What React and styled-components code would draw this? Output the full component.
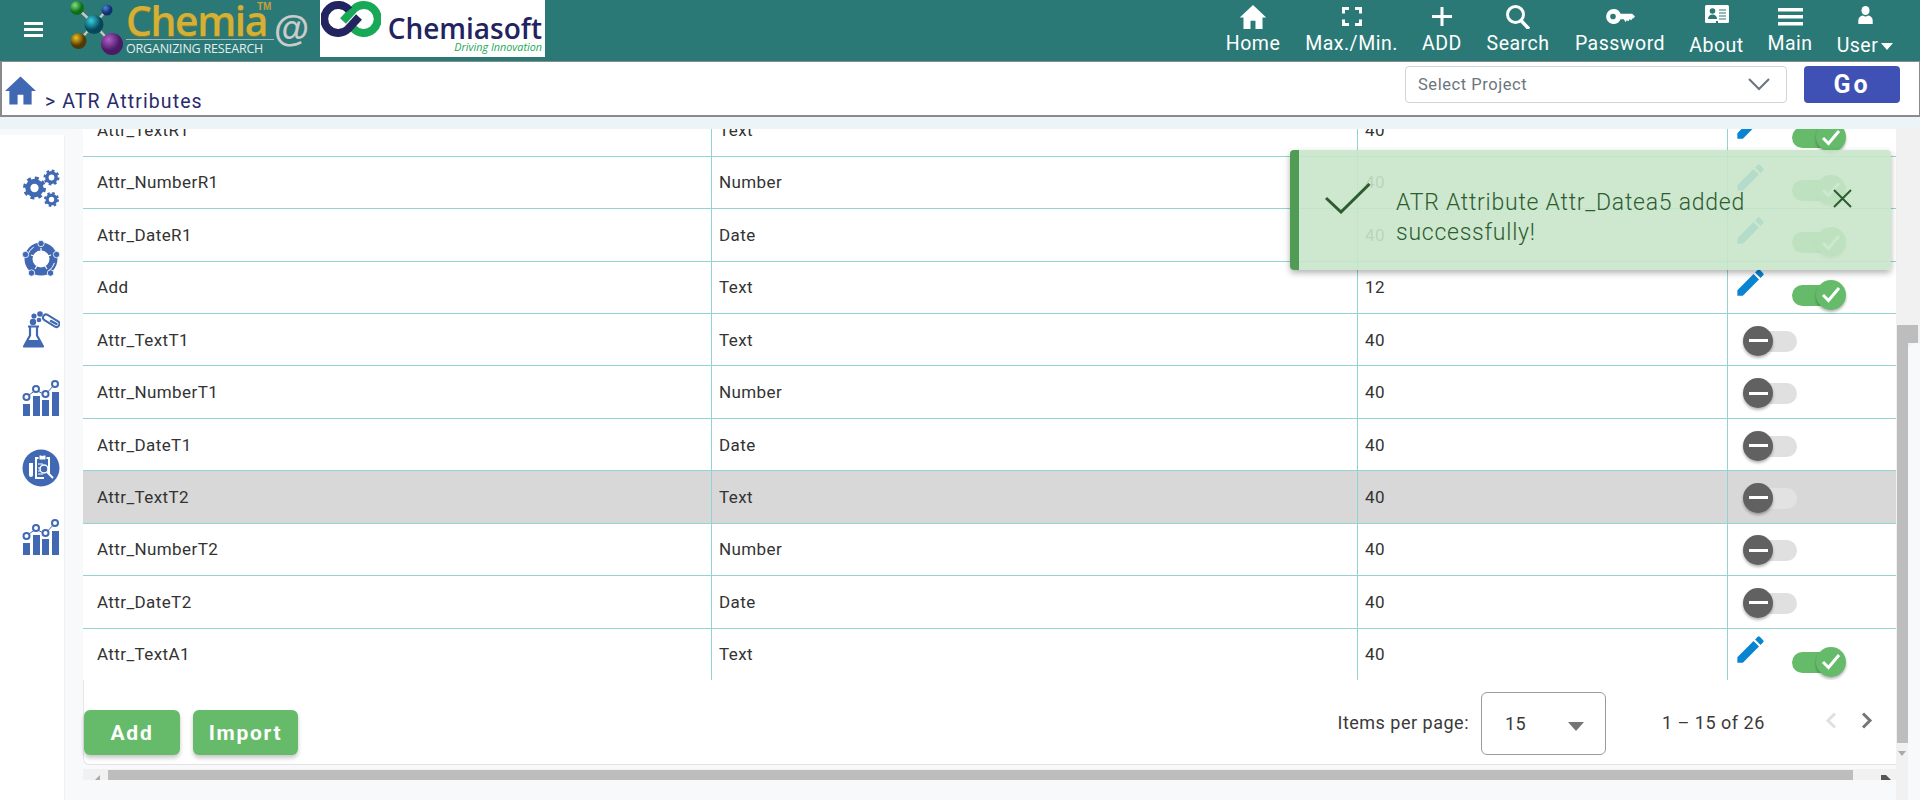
import React from 'react';
import styled, { createGlobalStyle } from 'styled-components';
import { MdEdit } from 'react-icons/md';

const GlobalStyle = createGlobalStyle`
  html, body {
    margin: 0;
    height: 800px;
    overflow: hidden;
    background: #f8f9fb;
    font-family: Roboto, "Liberation Sans", sans-serif;
  }
  * { box-sizing: border-box; }
`;

const Page = styled.div`
  width: 1920px;
  height: 800px;
  display: flex;
  flex-direction: column;
  overflow: hidden;
  position: relative;
`;

const Header = styled.header`
  height: 61px;
  background: #2b7977;
  display: flex;
  align-items: flex-start;
  flex-shrink: 0;
`;

const Burger = styled.div`
  width: 19px;
  margin: 22px 0 0 24px;
  display: flex;
  flex-direction: column;
  gap: 3px;
  span {
    height: 3px;
    background: #fff;
  }
`;

const ChemiaLogo = styled.div`
  display: flex;
  margin-left: 26px;
  height: 61px;
`;

const ChemiaWords = styled.div`
  display: flex;
  flex-direction: column;
  margin-left: 1px;
  width: 150px;
  position: relative;
`;

const ChemiaName = styled.div`
  font-family: "Open Sans", sans-serif;
  font-size: 41px;
  font-weight: 600;
  line-height: 38px;
  height: 38px;
  margin-top: 1px;
  letter-spacing: -1.5px;
  color: #d4b035;
  text-shadow: 0 1px 1px #8c7a2a;
`;

const Tm = styled.span`
  position: absolute;
  left: 131px;
  top: 1px;
  font-size: 10px;
  font-weight: 700;
  color: #c79f3a;
  font-family: "Liberation Sans", sans-serif;
`;

const ChemiaTag = styled.div`
  border-top: 1px solid #9fb8bc;
  width: 148px;
  font-family: "Open Sans", sans-serif;
  font-size: 12.5px;
  line-height: 17px;
  letter-spacing: -0.2px;
  color: #e4eeee;
  white-space: nowrap;
`;

const AtSign = styled.div`
  font-family: "Liberation Sans", sans-serif;
  font-size: 36px;
  font-weight: 700;
  line-height: 40px;
  color: #c8ccca;
  margin: 9px 0 0 -2px;
  width: 38px;
`;

const CompanyLogo = styled.div`
  width: 225px;
  height: 57px;
  background: #fff;
  display: flex;
  margin-left: 8px;
  padding-left: 1px;
`;

const CompanyWords = styled.div`
  display: flex;
  flex-direction: column;
  align-items: flex-end;
  margin-left: 8px;
  padding-top: 14px;
  width: 153px;
`;

const CompanyName = styled.div`
  font-family: "Open Sans", sans-serif;
  font-size: 28px;
  font-weight: 600;
  line-height: 28px;
  color: #22235f;
  white-space: nowrap;
`;

const CompanySlogan = styled.div`
  font-family: "Open Sans", sans-serif;
  font-style: italic;
  font-size: 10.8px;
  line-height: 11px;
  margin-top: -1px;
  color: #18a957;
  white-space: nowrap;
`;

const Nav = styled.nav`
  margin-left: auto;
  display: grid;
  grid-template-columns: 84px 113px 68px 84px 120px 73px 74px 76px;
  margin-right: 17px;
`;

const NavItem = styled.div`
  display: flex;
  flex-direction: column;
  align-items: center;
  color: #fff;
  height: 61px;
`;

const NavIcon = styled.div`
  height: 33px;
  display: flex;
  align-items: center;
  justify-content: center;
  margin-top: ${({ $low }) => ($low ? '-2px' : '0')};
  margin-bottom: ${({ $low }) => ($low ? '4px' : '0')};
`;

const NavLabel = styled.div`
  font-size: 19.5px;
  line-height: 22px;
  letter-spacing: 0.5px;
  white-space: nowrap;
  display: flex;
  align-items: center;
  gap: 3px;
`;

const Caret = styled.span`
  width: 0;
  height: 0;
  border-left: 6px solid transparent;
  border-right: 6px solid transparent;
  border-top: 7px solid #fff;
`;

const Crumbs = styled.div`
  height: 56px;
  background: #fff;
  border: 2px solid #8a8a8a;
  border-right-width: 1px;
  border-top-width: 1px;
  display: flex;
  flex-shrink: 0;
  padding-left: 3px;
`;

const CrumbHome = styled.div`
  margin-top: 14px;
  height: 29px;
`;

const CrumbText = styled.div`
  margin: 28px 0 0 9px;
  font-size: 19.5px;
  line-height: 24px;
  letter-spacing: 1.1px;
  color: #2a2a6e;
`;

const ProjectSelect = styled.div`
  margin: 4px 0 0 auto;
  width: 382px;
  height: 37px;
  border: 1px solid #ced4da;
  border-radius: 4px;
  display: flex;
  align-items: center;
  justify-content: space-between;
  padding: 0 16px 0 12px;
  font-size: 16.5px;
  letter-spacing: 0.55px;
  color: #6c757d;
`;

const GoButton = styled.button`
  margin: 4px 19px 0 17px;
  width: 96px;
  height: 37px;
  border: 0;
  border-radius: 4px;
  background: #3f51b5;
  color: #fff;
  font-family: Roboto, sans-serif;
  font-size: 25px;
  font-weight: 700;
  letter-spacing: 3px;
`;

const Band = styled.div`
  height: 12px;
  background: #ecf4f7;
  flex-shrink: 0;
`;

const Body = styled.div`
  flex: 1;
  display: flex;
  min-height: 0;
`;

const SideBar = styled.aside`
  width: 65px;
  margin-top: 6px;
  background: #fff;
  border-right: 1px solid #f0f0f0;
  flex-shrink: 0;
  display: flex;
  flex-direction: column;
  align-items: center;
  padding-top: 34px;
`;

const SideIcon = styled.div`
  height: ${({ $h }) => $h}px;
  width: 38px;
  margin-left: 18px;
  display: flex;
  justify-content: center;
`;

const Main = styled.main`
  width: 1813px;
  margin-left: 18px;
  flex-shrink: 0;
  display: flex;
  flex-direction: column;
`;

const Card = styled.div`
  height: 636px;
  background: #fff;
  border-bottom: 1px solid #e2e2e2;
  border-bottom-left-radius: 6px;
  flex-shrink: 0;
  display: flex;
  flex-direction: column;
`;

const TableClip = styled.div`
  height: 551px;
  overflow: hidden;
  flex-shrink: 0;
`;

const Table = styled.div`
  margin-top: -24.8px;
`;

const Row = styled.div`
  height: 52.44px;
  display: grid;
  grid-template-columns: 629px 646px 370px 1fr;
  background: ${({ $selected }) => ($selected ? '#d8d8d8' : '#fff')};
  border-bottom: 1px solid #92d4cf;
`;

const Cell = styled.div`
  font-size: 17px;
  letter-spacing: 0.4px;
  color: #333;
  display: flex;
  align-items: center;
  padding-left: ${({ $first }) => ($first ? '14px' : '7px')};
  border-right: 1px solid #92d4cf;
`;

const ActionCell = styled.div`
  display: flex;
  align-items: center;
  padding-left: ${({ $on }) => ($on ? '5px' : '21px')};
`;

const EditIcon = styled(MdEdit)`
  color: #0984d2;
  flex-shrink: 0;
  margin: -9px 24px 0 0;
`;

const Toggle = styled.div`
  width: 48px;
  height: 21px;
  border-radius: 11px;
  position: relative;
  margin-top: ${({ $on }) => ($on ? '16px' : '3px')};
  background: ${({ $on, $selected }) => ($on ? '#66bb6a' : $selected ? '#e2e2e2' : '#e0e0e0')};
`;

const Thumb = styled.div`
  position: absolute;
  top: -5px;
  left: ${({ $on }) => ($on ? '24px' : '-6px')};
  width: 30px;
  height: 30px;
  border-radius: 50%;
  background: ${({ $on }) => ($on ? '#66bb6a' : '#616161')};
  box-shadow: 0 2px 3px rgba(0, 0, 0, 0.3);
  display: flex;
  align-items: center;
  justify-content: center;
`;

const Dash = styled.span`
  width: 19px;
  height: 3px;
  background: #fff;
`;

const Footer = styled.div`
  flex: 1;
  display: flex;
  border-left: 1px solid #e6e6e6;
  border-bottom-left-radius: 6px;
`;

const Buttons = styled.div`
  display: flex;
  gap: 13px;
  margin-top: 30px;
`;

const GreenButton = styled.button`
  width: ${({ $w }) => $w}px;
  height: 45px;
  border: 0;
  border-radius: 6px;
  background: #66bb6a;
  color: #fff;
  font-family: Roboto, sans-serif;
  font-size: 21px;
  font-weight: 700;
  letter-spacing: 1.7px;
  box-shadow: 0 3px 4px rgba(0, 0, 0, 0.22);
`;

const Paginator = styled.div`
  margin-left: auto;
  display: flex;
  align-items: flex-start;
  font-size: 18px;
  letter-spacing: 0.5px;
  color: #3a3a3a;
`;

const PerPageLabel = styled.div`
  margin: 32px 12px 0 0;
  line-height: 22px;
  white-space: nowrap;
`;

const PerPage = styled.div`
  width: 125px;
  height: 63px;
  margin-top: 12px;
  border: 1px solid #9a9a9a;
  border-radius: 6px;
  display: flex;
  align-items: center;
  justify-content: space-between;
  padding: 0 21px 0 23px;
`;

const DownArrow = styled.span`
  width: 0;
  height: 0;
  border-left: 8px solid transparent;
  border-right: 8px solid transparent;
  border-top: 9px solid #757575;
  margin-top: 5px;
`;

const Range = styled.div`
  margin: 31px 0 0 56px;
  line-height: 24px;
  width: 103px;
  white-space: nowrap;
`;

const Pager = styled.div`
  display: flex;
  gap: 24px;
  margin: 32px 23px 0 60px;
`;

const HScroll = styled.div`
  height: 11px;
  margin-top: 4px;
  background: #f1f1f1;
  display: flex;
  align-items: flex-end;
  padding-top: 1px;
`;

const ScrollArrow = styled.span`
  width: 0;
  height: 0;
  flex-shrink: 0;
  margin: 0 0 0 ${({ $gap }) => $gap}px;
  border-bottom: 5px solid ${({ $dark }) => ($dark ? '#555' : '#aaa')};
  border-left: ${({ $dark }) => ($dark ? '5px solid #555' : '5px solid transparent')};
  border-right: ${({ $dark }) => ($dark ? '5px solid transparent' : '0')};
`;

const HThumb = styled.div`
  width: 1745px;
  height: 10px;
  margin-left: 8px;
  flex-shrink: 0;
  background: #bdbdbd;
`;

const VScroll = styled.div`
  width: 24px;
  flex-shrink: 0;
  display: flex;
  flex-direction: column;
  background: #f1f1f1;
  padding-top: 196px;
`;

const VThumb = styled.div`
  height: 18px;
  margin: 0 2px 0 1px;
  background: #bdbdbd;
`;

const VSplit = styled.div`
  display: flex;
  flex: 1;
  min-height: 0;
`;

const VTrack = styled.div`
  width: 12px;
  flex-shrink: 0;
  display: flex;
  flex-direction: column;
  align-items: center;
`;

const VThumbLow = styled.div`
  width: 11px;
  height: 400px;
  margin-left: 1px;
  background: #bdbdbd;
  flex-shrink: 0;
`;

const VArrow = styled.span`
  width: 0;
  height: 0;
  margin-top: 8px;
  border-left: 4px solid transparent;
  border-right: 4px solid transparent;
  border-top: 5px solid #aaa;
`;

const VRest = styled.div`
  flex: 1;
  background: #f8f9fb;
  border-top-left-radius: 8px;
`;

const Toast = styled.div`
  position: absolute;
  left: 1290px;
  top: 150px;
  width: 601px;
  height: 120px;
  border-left: 9px solid #519c54;
  border-radius: 4px;
  background: rgba(200, 230, 201, 0.9);
  box-shadow: 0 3px 6px rgba(0, 0, 0, 0.3);
  color: #2e5c30;
  display: flex;
  padding: 33px 0 0 26px;
`;

const ToastMessage = styled.div`
  width: 400px;
  margin: 5px 0 0 25px;
  font-size: 23px;
  font-weight: 300;
  line-height: 30px;
  letter-spacing: 0.75px;
`;

const ToastClose = styled.div`
  margin: 6px 0 0 37px;
  height: 18px;
`;

const rows = [
  ['Attr_TextR1', 'Text', '40', 'on'],
  ['Attr_NumberR1', 'Number', '40', 'on'],
  ['Attr_DateR1', 'Date', '40', 'on'],
  ['Add', 'Text', '12', 'on'],
  ['Attr_TextT1', 'Text', '40', 'off'],
  ['Attr_NumberT1', 'Number', '40', 'off'],
  ['Attr_DateT1', 'Date', '40', 'off'],
  ['Attr_TextT2', 'Text', '40', 'off', true],
  ['Attr_NumberT2', 'Number', '40', 'off'],
  ['Attr_DateT2', 'Date', '40', 'off'],
  ['Attr_TextA1', 'Text', '40', 'on'],
];

const Molecule = () => (
  <svg width="56" height="61" viewBox="0 0 56 61">
    <defs>
      <radialGradient id="bGreen" cx="35%" cy="30%"><stop offset="0" stopColor="#7fe07f" /><stop offset="1" stopColor="#0d6e1a" /></radialGradient>
      <radialGradient id="bBlue" cx="35%" cy="30%"><stop offset="0" stopColor="#4f86d8" /><stop offset="1" stopColor="#10306e" /></radialGradient>
      <radialGradient id="bCyan" cx="35%" cy="30%"><stop offset="0" stopColor="#35d0e0" /><stop offset="1" stopColor="#06485a" /></radialGradient>
      <radialGradient id="bGold" cx="35%" cy="30%"><stop offset="0" stopColor="#f0c020" /><stop offset="1" stopColor="#4f3a05" /></radialGradient>
      <radialGradient id="bPurple" cx="35%" cy="30%"><stop offset="0" stopColor="#b060c8" /><stop offset="1" stopColor="#4a1a66" /></radialGradient>
    </defs>
    <path d="M8 8 L25 24 L38 10 M25 24 L10 41 M25 24 L43 44" stroke="#c9c5c0" strokeWidth="2.500" fill="none" />
    <circle cx="8" cy="8" r="7" fill="url(#bGreen)" />
    <circle cx="38" cy="10" r="5.500" fill="url(#bBlue)" />
    <circle cx="25" cy="24.500" r="9.500" fill="url(#bCyan)" />
    <circle cx="9.500" cy="41" r="8" fill="url(#bGold)" />
    <circle cx="43" cy="44" r="11" fill="url(#bPurple)" />
  </svg>
);

const RingLogo = () => (
  <svg width="60" height="38" viewBox="0 0 60 38" fill="none" strokeWidth="8">
    <path d="M32 28A14 14 0 1 0 33 9L22 21" stroke="#18a957" />
    <path d="M28 10A14 14 0 1 0 27 29L38 17" stroke="#22235f" />
  </svg>
);

const HouseIcon = ({ width, height, color }) => (
  <svg width={width} height={height} viewBox="0 0 32 29" fill={color}>
    <path d="M16 0L32 15H27.500V29H19V19H13V29H4.500V15H0Z" />
  </svg>
);

const FullscreenIcon = () => (
  <svg width="20" height="19" viewBox="0 0 20 19" fill="none" stroke="#fff" strokeWidth="3">
    <path d="M1.500 6.500V1.500H7M13 1.500h5.500v5M18.500 12.500v5H13M7 17.500H1.500v-5" />
  </svg>
);

const PlusIcon = () => (
  <svg width="20" height="19" viewBox="0 0 20 19" stroke="#fff" strokeWidth="3">
    <path d="M10 0v19M0 9.500h20" />
  </svg>
);

const SearchIcon = () => (
  <svg width="24" height="24" viewBox="0 0 24 24" fill="none" stroke="#fff">
    <circle cx="9.500" cy="9.500" r="8" strokeWidth="3" />
    <path d="M15 15.500l8 8.500" strokeWidth="3.500" />
  </svg>
);

const KeyIcon = () => (
  <svg width="31" height="15" viewBox="0 0 31 16">
    <path fillRule="evenodd" fill="#fff" d="M8 0a8 8 0 0 1 7.600 5H28l3 3-2 2h-1l-1 2-2-1-1 2-2-1-1 2-2-3h-3.400A8 8 0 1 1 8 0zm-.5 5a3 3 0 1 0 0 6 3 3 0 0 0 0-6z" />
  </svg>
);

const ContactIcon = () => (
  <svg width="24" height="19" viewBox="0 0 24 19">
    <rect width="24" height="18" rx="1.500" fill="#fff" />
    <circle cx="7.500" cy="6" r="2.800" fill="#2b7977" />
    <path d="M3 14c0-3 2-4.500 4.500-4.500S12 11 12 14z" fill="#2b7977" />
    <path d="M14 5h7M14 8h7M14 11h7M14 14h7" stroke="#2b7977" strokeWidth="1.200" />
    <path d="M11 16h2v3h-2z" fill="#2b7977" />
  </svg>
);

const MenuIcon = () => (
  <svg width="25" height="18" viewBox="0 0 25 18" fill="#fff">
    <path d="M0 0h25v3.500H0zM0 7h25v3.500H0zM0 14h25v3.500H0z" />
  </svg>
);

const UserIcon = () => (
  <svg width="15" height="18" viewBox="0 0 16 20" fill="#fff">
    <ellipse cx="8" cy="5" rx="4.500" ry="5" />
    <path d="M0 20v-4c0-3 2-5 5-5.500 2 1.500 4 1.500 6 0 3 .5 5 2.500 5 5.500v4z" />
  </svg>
);

const Gear = ({ x, y, r }) => {
  const teethRadius = r * 0.86;
  const dash = (2 * Math.PI * teethRadius) / 16;
  return (
    <g fill="none" stroke="#4169b3">
      <circle cx={x} cy={y} r={r * 0.58} strokeWidth={r * 0.44} />
      <circle cx={x} cy={y} r={teethRadius} strokeWidth={r * 0.28} strokeDasharray={`${dash} ${dash}`} />
    </g>
  );
};

const GearsIcon = () => (
  <svg width="38" height="38" viewBox="0 0 38 38">
    <Gear x={12.500} y={19} r={11.500} />
    <Gear x={29.500} y={8.500} r={8} />
    <Gear x={29.500} y={30.500} r={7.500} />
  </svg>
);

const NetworkIcon = () => (
  <svg width="38" height="38" viewBox="0 0 38 38">
    <circle cx="19" cy="19" r="12.500" fill="none" stroke="#4169b3" strokeWidth="8" />
    <circle cx="19" cy="19" r="14" fill="none" stroke="#fff" strokeWidth="1" strokeDasharray="10 34" strokeDashoffset="-4" />
    <path d="M19 8v3M29 15l-3 1M25 29l-2-3M13 29l2-3M9 15l3 1" stroke="#fff" strokeWidth="1.200" />
    <g fill="#4169b3" stroke="#fff" strokeWidth="0.800">
      <circle cx="19" cy="3.500" r="3.200" />
      <circle cx="34.500" cy="14.500" r="3.200" />
      <circle cx="28.500" cy="33" r="3.200" />
      <circle cx="9.500" cy="33" r="3.200" />
      <circle cx="3.500" cy="14.500" r="3.200" />
    </g>
  </svg>
);

const FlaskIcon = () => (
  <svg width="38" height="38" viewBox="0 0 38 38" fill="#4169b3">
    <circle cx="11" cy="11" r="3.200" /><circle cx="12" cy="5" r="2.600" /><circle cx="18" cy="3" r="2.800" /><circle cx="17" cy="9" r="2.300" />
    <path d="M6 15.500h11M8 16v8.500L2 35.500h19L15 24.500V16" fill="#fff" stroke="#4169b3" strokeWidth="2.200" strokeLinejoin="round" />
    <path d="M5.500 29h12l3 6.500H2.500z" />
    <path d="M24 6.500L34.500 13" stroke="#4169b3" strokeWidth="8" strokeLinecap="round" />
    <path d="M24 6.500L34.500 13" stroke="#fff" strokeWidth="4" strokeLinecap="round" />
    <path d="M29 10L34.500 13" stroke="#4169b3" strokeWidth="2.500" strokeLinecap="round" />
  </svg>
);

const ChartIcon = () => (
  <svg width="38" height="36" viewBox="0 0 38 36" fill="#4169b3">
    <path d="M1 24h7v12H1zM11 16h7v20h-7zM20 20h7v16h-7zM30 12h7v24h-7z" />
    <path d="M4 17l10-7 9 5 10-11" stroke="#4169b3" strokeWidth="1" fill="none" />
    <g fill="#fff" stroke="#4169b3" strokeWidth="2">
      <circle cx="4.500" cy="17" r="3" /><circle cx="14" cy="9" r="3" /><circle cx="23.500" cy="14" r="3" /><circle cx="33" cy="4" r="3" />
    </g>
  </svg>
);

const ReportIcon = () => (
  <svg width="38" height="38" viewBox="0 0 38 38">
    <circle cx="19" cy="19" r="18.500" fill="#4169b3" />
    <path d="M13 8h15v17h-2V10H15v18h7v2h-9z" fill="#fff" />
    <path d="M17 6h7v5h-7z" fill="#fff" stroke="#4169b3" />
    <circle cx="20.500" cy="6" r="1" fill="#4169b3" />
    <path d="M7 14h4v12a2 2 0 0 1-4 0z" fill="#fff" />
    <circle cx="22" cy="20" r="4" fill="#4169b3" stroke="#fff" strokeWidth="1.500" />
    <path d="M25 23l6 6" stroke="#fff" strokeWidth="2" />
    <path d="M16 15h5M16 19h2M16 22h2M16 25h5" stroke="#fff" strokeWidth="1" />
  </svg>
);

const ToggleCheck = () => (
  <svg width="20" height="17" viewBox="0 0 20 17" fill="none" stroke="#fff" strokeWidth="3">
    <path d="M2 9l5.500 5.500L18 2" />
  </svg>
);

const BigCheck = () => (
  <svg width="46" height="31" viewBox="0 0 46 31" fill="none" stroke="#2e5c30" strokeWidth="3">
    <path d="M1 15l15 14L44.500 1" />
  </svg>
);

const CloseIcon = () => (
  <svg width="19" height="19" viewBox="0 0 19 19" stroke="#2e5c30" strokeWidth="2">
    <path d="M1 1l17 17M18 1L1 18" />
  </svg>
);

const Chevron = ({ dir, color }) => (
  <svg width="12" height="17" viewBox="0 0 12 17" fill="none" stroke={color} strokeWidth="3">
    <path d={dir === 'left' ? 'M10 1.500L3 8.500l7 7' : 'M2 1.500l7 7-7 7'} />
  </svg>
);

const SelectArrow = () => (
  <svg width="22" height="13" viewBox="0 0 22 13" fill="none" stroke="#6c757d" strokeWidth="2">
    <path d="M1 1l10 10L21 1" />
  </svg>
);

const App = () => (
  <Page>
    <GlobalStyle />
    <Header>
      <Burger><span /><span /><span /></Burger>
      <ChemiaLogo>
        <Molecule />
        <ChemiaWords>
          <ChemiaName>Chemia</ChemiaName>
          <Tm>TM</Tm>
          <ChemiaTag>ORGANIZING RESEARCH</ChemiaTag>
        </ChemiaWords>
        <AtSign>@</AtSign>
      </ChemiaLogo>
      <CompanyLogo>
        <RingLogo />
        <CompanyWords>
          <CompanyName>Chemiasoft</CompanyName>
          <CompanySlogan>Driving Innovation</CompanySlogan>
        </CompanyWords>
      </CompanyLogo>
      <Nav>
        <NavItem><NavIcon><HouseIcon width={28} height={24} color="#fff" /></NavIcon><NavLabel>Home</NavLabel></NavItem>
        <NavItem><NavIcon><FullscreenIcon /></NavIcon><NavLabel>Max./Min.</NavLabel></NavItem>
        <NavItem><NavIcon><PlusIcon /></NavIcon><NavLabel>ADD</NavLabel></NavItem>
        <NavItem><NavIcon><SearchIcon /></NavIcon><NavLabel>Search</NavLabel></NavItem>
        <NavItem><NavIcon><KeyIcon /></NavIcon><NavLabel>Password</NavLabel></NavItem>
        <NavItem><NavIcon $low><ContactIcon /></NavIcon><NavLabel>About</NavLabel></NavItem>
        <NavItem><NavIcon><MenuIcon /></NavIcon><NavLabel>Main</NavLabel></NavItem>
        <NavItem><NavIcon $low><UserIcon /></NavIcon><NavLabel>User<Caret /></NavLabel></NavItem>
      </Nav>
    </Header>
    <Crumbs>
      <CrumbHome><HouseIcon width={31} height={29} color="#4169b3" /></CrumbHome>
      <CrumbText>&gt; ATR Attributes</CrumbText>
      <ProjectSelect>Select Project<SelectArrow /></ProjectSelect>
      <GoButton>Go</GoButton>
    </Crumbs>
    <Band />
    <Body>
      <SideBar>
        <SideIcon $h={71}><GearsIcon /></SideIcon>
        <SideIcon $h={71}><NetworkIcon /></SideIcon>
        <SideIcon $h={69}><FlaskIcon /></SideIcon>
        <SideIcon $h={69}><ChartIcon /></SideIcon>
        <SideIcon $h={70}><ReportIcon /></SideIcon>
        <SideIcon $h={60}><ChartIcon /></SideIcon>
      </SideBar>
      <Main>
        <Card>
          <TableClip>
            <Table>
              {rows.map(([name, type, size, state, selected]) => (
                <Row key={name} $selected={selected}>
                  <Cell $first>{name}</Cell>
                  <Cell>{type}</Cell>
                  <Cell>{size}</Cell>
                  <ActionCell $on={state === 'on'}>
                    {state === 'on' && <EditIcon size={35} />}
                    <Toggle $on={state === 'on'} $selected={selected}>
                      <Thumb $on={state === 'on'}>
                        {state === 'on' ? <ToggleCheck /> : <Dash />}
                      </Thumb>
                    </Toggle>
                  </ActionCell>
                </Row>
              ))}
            </Table>
          </TableClip>
          <Footer>
            <Buttons>
              <GreenButton $w={96}>Add</GreenButton>
              <GreenButton $w={105}>Import</GreenButton>
            </Buttons>
            <Paginator>
              <PerPageLabel>Items per page:</PerPageLabel>
              <PerPage>15<DownArrow /></PerPage>
              <Range>1 – 15 of 26</Range>
              <Pager>
                <Chevron dir="left" color="#e0e0e0" />
                <Chevron dir="right" color="#757575" />
              </Pager>
            </Paginator>
          </Footer>
        </Card>
        <HScroll>
          <ScrollArrow $gap={12} />
          <HThumb />
          <ScrollArrow $gap={28} $dark />
        </HScroll>
      </Main>
      <VScroll>
        <VThumb />
        <VSplit>
          <VTrack>
            <VThumbLow />
            <VArrow />
          </VTrack>
          <VRest />
        </VSplit>
      </VScroll>
    </Body>
    <Toast>
      <BigCheck />
      <ToastMessage>ATR Attribute Attr_Datea5 added successfully!</ToastMessage>
      <ToastClose><CloseIcon /></ToastClose>
    </Toast>
  </Page>
);

export default App;
